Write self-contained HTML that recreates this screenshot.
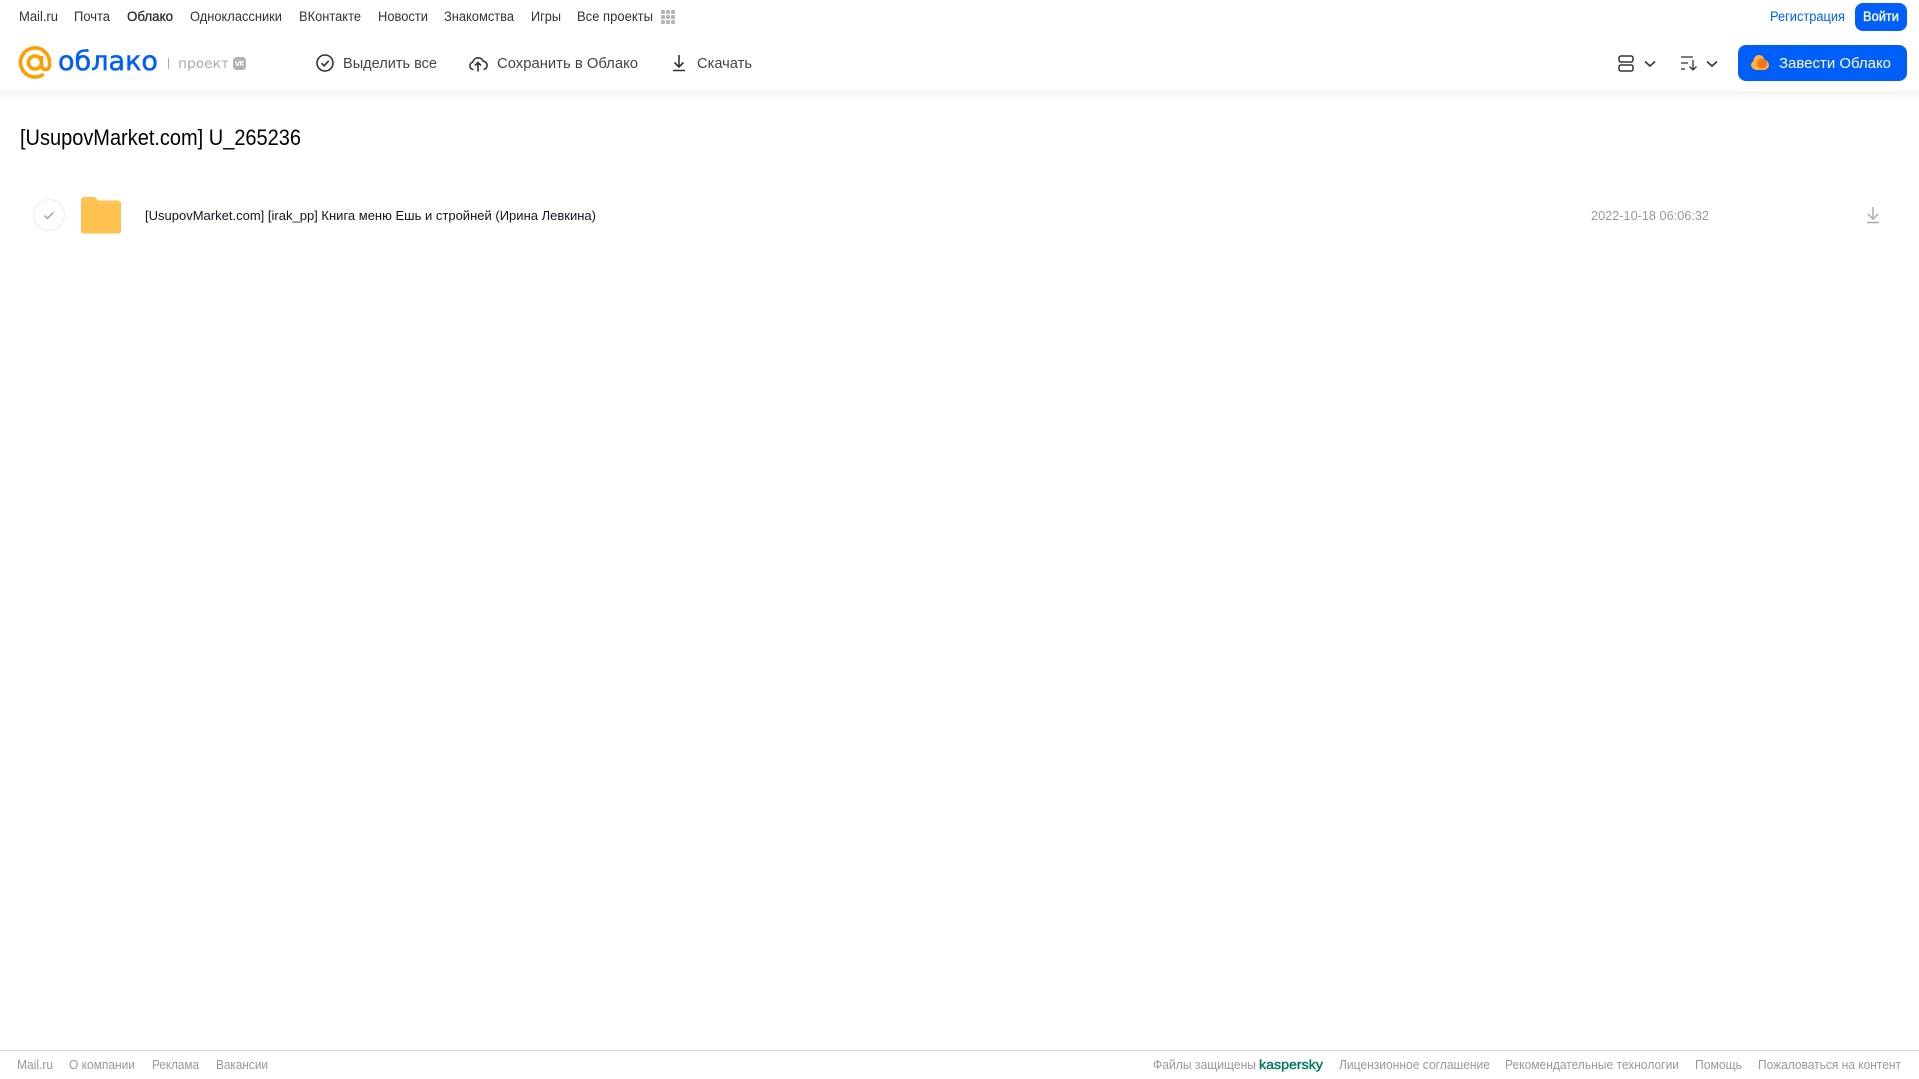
<!DOCTYPE html>
<html lang="ru">
<head>
<meta charset="utf-8">
<title>[UsupovMarket.com] U_265236</title>
<style>
html,body{margin:0;padding:0;width:1919px;height:1079px;overflow:hidden;background:#fff}
svg{display:block;position:absolute;left:0;top:0}
text{font-family:"Liberation Sans",sans-serif}
.n{font-size:13.5px;fill:#333}
.t{font-size:15px;fill:#444}
.f{font-size:12.5px;fill:#999}
</style>
</head>
<body>
<svg width="1919" height="1079" viewBox="0 0 1919 1079" xmlns="http://www.w3.org/2000/svg">
<defs>
<linearGradient id="sh" x1="0" y1="0" x2="0" y2="1"><stop offset="0" stop-color="#f2f2f2"/><stop offset="1" stop-color="#fff"/></linearGradient>
</defs>
<rect x="0" y="91" width="1919" height="8" fill="url(#sh)"/>

<!-- top nav -->
<text class="n" x="19" y="21" textLength="39" lengthAdjust="spacingAndGlyphs">Mail.ru</text>
<text class="n" x="74" y="21" textLength="36" lengthAdjust="spacingAndGlyphs">Почта</text>
<text class="n" x="127" y="21" textLength="46" lengthAdjust="spacingAndGlyphs" stroke="#333" stroke-width=".35">Облако</text>
<text class="n" x="190" y="21" textLength="92" lengthAdjust="spacingAndGlyphs">Одноклассники</text>
<text class="n" x="299" y="21" textLength="62" lengthAdjust="spacingAndGlyphs">ВКонтакте</text>
<text class="n" x="378" y="21" textLength="50" lengthAdjust="spacingAndGlyphs">Новости</text>
<text class="n" x="444" y="21" textLength="70" lengthAdjust="spacingAndGlyphs">Знакомства</text>
<text class="n" x="531" y="21" textLength="30" lengthAdjust="spacingAndGlyphs">Игры</text>
<text class="n" x="577" y="21" textLength="76" lengthAdjust="spacingAndGlyphs">Все проекты</text>
<g fill="#b5b5b5">
<rect x="661" y="10" width="4" height="4" rx="1"/><rect x="666" y="10" width="4" height="4" rx="1"/><rect x="671" y="10" width="4" height="4" rx="1"/>
<rect x="661" y="15" width="4" height="4" rx="1"/><rect x="666" y="15" width="4" height="4" rx="1"/><rect x="671" y="15" width="4" height="4" rx="1"/>
<rect x="661" y="20" width="4" height="4" rx="1"/><rect x="666" y="20" width="4" height="4" rx="1"/><rect x="671" y="20" width="4" height="4" rx="1"/>
</g>
<text x="1770" y="21" font-size="13.5" fill="#005ff9" textLength="75" lengthAdjust="spacingAndGlyphs">Регистрация</text>
<rect x="1855" y="3" width="52" height="28" rx="8" fill="#005ff9"/>
<text x="1863" y="21" font-size="13.500" fill="#fff" stroke="#fff" stroke-width=".35" textLength="36" lengthAdjust="spacingAndGlyphs">Войти</text>

<!-- logo -->
<g fill="none" stroke="#ff9e00" stroke-width="3.6">
<circle cx="35" cy="62.5" r="6.5"/>
<path d="M41.500 56V65.500a4 4 0 0 0 8 0v-3a14.500 14.500 0 1 0-6 11.700"/>
</g>
<text x="58" y="70" font-size="27" font-family="DejaVu Sans" style="font-family:'DejaVu Sans',sans-serif" fill="#005ff9" stroke="#005ff9" stroke-width=".5" textLength="100" lengthAdjust="spacingAndGlyphs">облако</text>
<rect x="168" y="58" width="1" height="11" fill="#aaa"/>
<text x="178" y="68" font-size="13.500" style="font-family:'DejaVu Sans',sans-serif" fill="#aaa" textLength="51" lengthAdjust="spacingAndGlyphs">проект</text>
<rect x="233" y="57" width="13" height="13" rx="3.500" fill="#b3b3b3"/>
<path d="M235.500 61l1.600 4.500h.8l1.400-4.500M240.600 60.500v5M243.800 61l-3 2.200 3 2.400" fill="none" stroke="#fff" stroke-width="1.100"/>

<!-- toolbar -->
<circle cx="325" cy="63" r="8" fill="none" stroke="#333" stroke-width="1.600"/>
<path d="M321.500 63.200l2.600 2.600 4.600-5" fill="none" stroke="#333" stroke-width="1.600"/>
<text class="t" x="343" y="68" textLength="94" lengthAdjust="spacingAndGlyphs">Выделить все</text>
<path d="M473.500 69.500a3.700 3.700 0 0 1-.8-7.300 5.600 5.600 0 0 1 10.600-1 4.200 4.200 0 0 1 .4 8.300" fill="none" stroke="#333" stroke-width="1.600"/>
<path d="M478 71.500v-9M475 65.500l3-3 3 3" fill="none" stroke="#333" stroke-width="1.600"/>
<text class="t" x="497" y="68" textLength="141" lengthAdjust="spacingAndGlyphs">Сохранить в Облако</text>
<path d="M679 55v12M674.500 62.500l4.500 4.500 4.500-4.500M673 70.500h12" fill="none" stroke="#333" stroke-width="1.600"/>
<text class="t" x="697" y="68" textLength="55" lengthAdjust="spacingAndGlyphs">Скачать</text>

<!-- view controls -->
<rect x="1619" y="56" width="14" height="6" rx="2" fill="none" stroke="#333" stroke-width="1.500"/>
<rect x="1619" y="65" width="14" height="6" rx="2" fill="none" stroke="#333" stroke-width="1.500"/>
<path d="M1645 61.500l5 4.500 5-4.500M1707 61.500l5 4.500 5-4.500" fill="none" stroke="#333" stroke-width="1.600"/>
<path d="M1681 57h12M1681 63h7M1681 69h4" fill="none" stroke="#333" stroke-width="1.200"/>
<path d="M1693 60v9.500M1689.500 66.500l3.500 3.500 3.500-3.500" fill="none" stroke="#333" stroke-width="1.300"/>

<!-- CTA -->
<rect x="1738" y="45" width="169" height="36" rx="8" fill="#005ff9"/>
<g fill="#ffb23f">
<circle cx="1755.500" cy="65" r="4.500"/>
<circle cx="1759" cy="60.500" r="5.500"/>
<circle cx="1764" cy="65" r="5"/>
<rect x="1755" y="62" width="9" height="8"/>
</g>
<circle cx="1762" cy="63.500" r="5" fill="#f5761f"/>
<text x="1779" y="68" font-size="15" fill="#fff" textLength="112" lengthAdjust="spacingAndGlyphs">Завести Облако</text>

<!-- title -->
<text x="20" y="145" font-size="22" fill="#000" textLength="281" lengthAdjust="spacingAndGlyphs">[UsupovMarket.com] U_265236</text>

<!-- row -->
<circle cx="49" cy="215" r="15.500" fill="#fff" stroke="#ececec" stroke-width="1"/>
<path d="M44.500 215.500l3 3 6-6" fill="none" stroke="#999" stroke-width="1.300"/>
<path d="M81 200a3 3 0 0 1 3-3h9c2 0 3 .7 4 2l1 1.500h20a3 3 0 0 1 3 3V231a2.500 2.500 0 0 1-2.500 2.500h-35A2.500 2.500 0 0 1 81 231z" fill="#ffc14f"/>
<rect x="81" y="202" width="40" height="1" fill="#ffca66"/>
<text x="145" y="220" font-size="13" fill="#1c1020" textLength="451" lengthAdjust="spacingAndGlyphs">[UsupovMarket.com] [irak_pp] Книга меню Ешь и стройней (Ирина Левкина)</text>
<text x="1591" y="220" font-size="12.500" fill="#999" textLength="118" lengthAdjust="spacingAndGlyphs">2022-10-18 06:06:32</text>
<path d="M1873 207v12M1868 214l5 5 5-5M1867 222.500h12" fill="none" stroke="#aaa" stroke-width="1.400"/>

<!-- footer -->
<rect x="0" y="1050" width="1919" height="1" fill="#d8d8d8"/>
<text class="f" x="17" y="1069" textLength="36" lengthAdjust="spacingAndGlyphs">Mail.ru</text>
<text class="f" x="69" y="1069" textLength="66" lengthAdjust="spacingAndGlyphs">О компании</text>
<text class="f" x="152" y="1069" textLength="47" lengthAdjust="spacingAndGlyphs">Реклама</text>
<text class="f" x="216" y="1069" textLength="52" lengthAdjust="spacingAndGlyphs">Вакансии</text>
<text class="f" x="1153" y="1069" textLength="103" lengthAdjust="spacingAndGlyphs">Файлы защищены</text>
<text x="1259" y="1069" font-size="13" fill="#00775f" stroke="#00775f" stroke-width=".4" textLength="64" lengthAdjust="spacingAndGlyphs">kaspersky</text>
<text class="f" x="1339" y="1069" textLength="151" lengthAdjust="spacingAndGlyphs">Лицензионное соглашение</text>
<text class="f" x="1505" y="1069" textLength="174" lengthAdjust="spacingAndGlyphs">Рекомендательные технологии</text>
<text class="f" x="1695" y="1069" textLength="47" lengthAdjust="spacingAndGlyphs">Помощь</text>
<text class="f" x="1758" y="1069" textLength="143" lengthAdjust="spacingAndGlyphs">Пожаловаться на контент</text>
</svg>
</body>
</html>
